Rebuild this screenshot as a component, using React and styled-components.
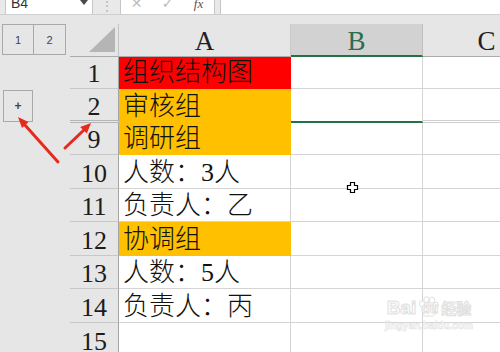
import React from "react";
import styled, { createGlobalStyle } from "styled-components";

const Global = createGlobalStyle`
  html, body { margin: 0; padding: 0; }
  body { width: 500px; height: 352px; overflow: hidden; background: #e6e6e6; }
`;

const Page = styled.div`
  position: relative;
  width: 500px;
  height: 352px;
  overflow: hidden;
  display: flex;
  flex-direction: column;
  gap: 9px;
  background: #e6e6e6;
  font-family: "Liberation Sans", Arial, sans-serif;
`;

const FormulaBar = styled.div`
  display: flex;
  height: 15px;
  flex: none;
  box-sizing: border-box;
  border-bottom: 1px solid #cfcfcf;
  background: #e9e9e9;
`;

const WhiteBox = styled.div`
  height: 14px;
  background: #fff;
  border-left: 1px solid #c6c6c6;
  border-right: 1px solid #c6c6c6;
  box-sizing: border-box;
  overflow: hidden;
  display: flex;
`;

const NameBox = styled(WhiteBox)`
  margin-left: 5px;
  width: 88px;
  justify-content: space-between;
  padding: 0 4px 0 5px;
`;

const NameText = styled.span`
  display: block;
  margin-top: -6px;
  font-size: 14px;
  line-height: 18px;
  color: #333;
`;

const DropArrow = styled.span`
  width: 0;
  height: 0;
  margin-top: 0;
  border-top: 5px solid #4a4a4a;
  border-left: 4px solid transparent;
  border-right: 4px solid transparent;
`;

const Dots = styled.div`
  width: 27px;
  text-align: center;
  font-size: 12px;
  line-height: 13px;
  color: #b4b4b4;
`;

const FxBox = styled(WhiteBox)`
  width: 95px;
`;

const FxIcon = styled.span`
  display: block;
  width: 32px;
  text-align: center;
  margin-top: ${(p) => (p.$fx ? "-5px" : "-6px")};
  font-size: ${(p) => (p.$fx ? "13px" : "14px")};
  line-height: 18px;
  color: ${(p) => (p.$fx ? "#555" : "#bdbdbd")};
  font-style: ${(p) => (p.$fx ? "italic" : "normal")};
  font-family: ${(p) => (p.$fx ? '"Liberation Serif", serif' : '"DejaVu Sans", sans-serif')};
`;

const FormulaInput = styled(WhiteBox)`
  margin-left: 5px;
  flex: 1;
  border-right: none;
`;

const Sheet = styled.div`
  display: flex;
  flex-direction: column;
`;

const RowLine = styled.div`
  display: flex;
  height: ${(p) => p.$h}px;
  flex: none;
`;

const Gutter = styled.div`
  width: 70px;
  flex: none;
  display: flex;
  align-items: flex-start;
  background: #e6e6e6;
`;

const LevelButton = styled.div`
  width: 32px;
  height: 31px;
  box-sizing: border-box;
  border: 1px solid #a9a9a9;
  border-left: ${(p) => (p.$first ? "1px solid #a9a9a9" : "none")};
  margin-left: ${(p) => (p.$first ? "2px" : "0")};
  display: flex;
  align-items: center;
  justify-content: center;
  font-size: 11px;
  color: #444;
  background: #e6e6e6;
`;

const PlusButton = styled.div`
  margin: 1px 0 0 3px;
  width: 30px;
  height: 32px;
  box-sizing: border-box;
  border: 1px solid #a9a9a9;
  display: flex;
  align-items: center;
  justify-content: center;
  font-size: 12px;
  font-weight: bold;
  color: #444;
`;

const Corner = styled.div`
  width: 49px;
  flex: none;
  box-sizing: border-box;
  border-right: 1px solid #c4c4c4;
  border-bottom: 1px solid #ababab;
  display: flex;
  align-items: flex-end;
  justify-content: flex-end;
  padding: 0 3px 4px 0;
`;

const ColHeader = styled.div`
  width: ${(p) => p.$w}px;
  flex: none;
  box-sizing: border-box;
  background: ${(p) => (p.$active ? "#d2d2d2" : "#e6e6e6")};
  border-right: 1px solid ${(p) => (p.$active ? "#bdbdbd" : "#c9c9c9")};
  border-bottom: ${(p) => (p.$active ? "2px solid #217346" : "1px solid #ababab")};
  display: flex;
  align-items: flex-end;
  justify-content: center;
  font-family: "Liberation Serif", "Times New Roman", serif;
  font-size: 27px;
  line-height: 27px;
  padding-bottom: ${(p) => (p.$active ? "0" : "1px")};
  color: ${(p) => (p.$active ? "#2b6e4c" : "#1f1f2a")};
`;

const RowHeader = styled.div`
  width: 49px;
  flex: none;
  box-sizing: border-box;
  background: #e6e6e6;
  border-right: 1px solid #a3a3a3;
  border-bottom: ${(p) => (p.$seam ? "3px double #b5b5b5" : "1px solid #c8c8c8")};
  display: flex;
  align-items: flex-end;
  justify-content: center;
  font-family: "Liberation Serif", "Times New Roman", serif;
  font-size: 26px;
  line-height: 26px;
  padding-bottom: ${(p) => (p.$seam ? "0" : "1px")};
  color: #1c1c1c;
`;

const Cell = styled.div`
  width: ${(p) => p.$w}px;
  flex: none;
  box-sizing: border-box;
  background: ${(p) => p.$fill || "#fff"};
  border-right: 1px solid ${(p) => p.$fill || "#d4d4d4"};
  border-bottom: ${(p) =>
    p.$selected
      ? "2px solid #217346"
      : p.$seam && !p.$fill
      ? "3px double #cfcfcf"
      : `1px solid ${p.$fill || "#d4d4d4"}`};
  display: flex;
  align-items: flex-end;
  padding: 0 0 2px 4px;
  white-space: nowrap;
  overflow: visible;
  font-family: "Liberation Serif", "Noto Sans CJK SC", serif;
  font-size: 26px;
  font-weight: 300;
  line-height: 26px;
  color: #111;
`;

const Overlay = styled.svg`
  position: absolute;
  left: 0;
  top: 0;
  width: 500px;
  height: 352px;
  pointer-events: none;
`;

const Watermark = styled.div`
  position: absolute;
  left: 383px;
  top: 296px;
  width: 92px;
  display: flex;
  flex-direction: column;
  align-items: center;
  pointer-events: none;
  color: rgba(255, 255, 255, 0.9);
  font-family: "Liberation Sans", Arial, sans-serif;
`;

const MarkLine = styled.div`
  display: flex;
  align-items: flex-end;
  gap: 1px;
  font-size: 19px;
  font-weight: bold;
  line-height: 20px;
  -webkit-text-stroke: 1px #e0e0e0;
`;

const MarkSmall = styled.span`
  margin-left: -19px;
  font-size: 14px;
`;

const MarkCjk = styled.span`
  font-family: "Noto Sans CJK SC", sans-serif;
  font-size: 15px;
  margin-left: 2px;
`;

const MarkUrl = styled.div`
  font-size: 10px;
  line-height: 12px;
  font-weight: bold;
  margin-top: 2px;
  color: rgba(255, 255, 255, 0.9);
  -webkit-text-stroke: 0.6px #e2e2e2;
`;

const rows = [
  { n: "1", h: 32, a: "组织结构图", fill: "#ff0000" },
  { n: "2", h: 34, a: "审核组", fill: "#ffc000", plus: true, seam: true },
  { n: "9", h: 32, a: "调研组", fill: "#ffc000" },
  { n: "10", h: 34, a: "人数：3人" },
  { n: "11", h: 33, a: "负责人：乙" },
  { n: "12", h: 34, a: "协调组", fill: "#ffc000" },
  { n: "13", h: 33, a: "人数：5人" },
  { n: "14", h: 34, a: "负责人：丙" },
  { n: "15", h: 34, a: "" },
];

export default function App() {
  return (
    <Page>
      <Global />
      <FormulaBar>
        <NameBox>
          <NameText>B4</NameText>
          <DropArrow />
        </NameBox>
        <Dots>⋮</Dots>
        <FxBox>
          <FxIcon>✕</FxIcon>
          <FxIcon>✓</FxIcon>
          <FxIcon $fx>fx</FxIcon>
        </FxBox>
        <FormulaInput />
      </FormulaBar>
      <Sheet>
        <RowLine $h={33}>
          <Gutter>
            <LevelButton $first>1</LevelButton>
            <LevelButton>2</LevelButton>
          </Gutter>
          <Corner>
            <svg width="26" height="25" viewBox="0 0 26 25">
              <path d="M26 0 L26 25 L0 25 Z" fill="#b5b5b5" />
            </svg>
          </Corner>
          <ColHeader $w={172}>A</ColHeader>
          <ColHeader $w={132} $active>
            B
          </ColHeader>
          <ColHeader $w={128}>C</ColHeader>
        </RowLine>
        {rows.map((r) => (
          <RowLine key={r.n} $h={r.h}>
            <Gutter>{r.plus && <PlusButton>+</PlusButton>}</Gutter>
            <RowHeader $seam={r.seam}>{r.n}</RowHeader>
            <Cell $w={172} $fill={r.fill} $seam={r.seam}>
              {r.a}
            </Cell>
            <Cell $w={132} $seam={r.seam} $selected={r.seam} />
            <Cell $w={128} $seam={r.seam} />
          </RowLine>
        ))}
      </Sheet>

      <Overlay viewBox="0 0 500 352">
        <g stroke="#e62a1e" strokeWidth="3" strokeLinecap="round">
          <line x1="58" y1="162" x2="24" y2="124" />
          <line x1="65" y1="148" x2="85" y2="129" />
        </g>
        <g fill="#e62a1e">
          <polygon points="18,117 28.5,122 22,128" />
          <polygon points="91,123 86.8,133.6 80.2,127" />
        </g>
        <path
          d="M347.5 185.5 h3 v-3 h4 v3 h3 v4 h-3 v3 h-4 v-3 h-3 z"
          fill="#fff"
          stroke="#000"
          strokeWidth="1.2"
        />
      </Overlay>

      <Watermark>
        <MarkLine>
          <span>Bai</span>
          <svg width="22" height="22" viewBox="0 0 22 22">
            <g fill="rgba(255,255,255,0.9)" stroke="#e0e0e0" strokeWidth="1">
              <ellipse cx="5" cy="8" rx="2.6" ry="3.2" />
              <ellipse cx="9.5" cy="3.8" rx="2.6" ry="3.2" />
              <ellipse cx="15" cy="4.2" rx="2.6" ry="3.2" />
              <ellipse cx="19" cy="9" rx="2.4" ry="3" />
              <path d="M6 18 C6 12 9 10 12 10 C15 10 18 13 18 17 C18 21 14 20 12 20 C9.5 20 6 21 6 18 Z" />
            </g>
          </svg>
          <MarkSmall>du</MarkSmall>
          <MarkCjk>经验</MarkCjk>
        </MarkLine>
        <MarkUrl>jingyan.baidu.com</MarkUrl>
      </Watermark>
    </Page>
  );
}
